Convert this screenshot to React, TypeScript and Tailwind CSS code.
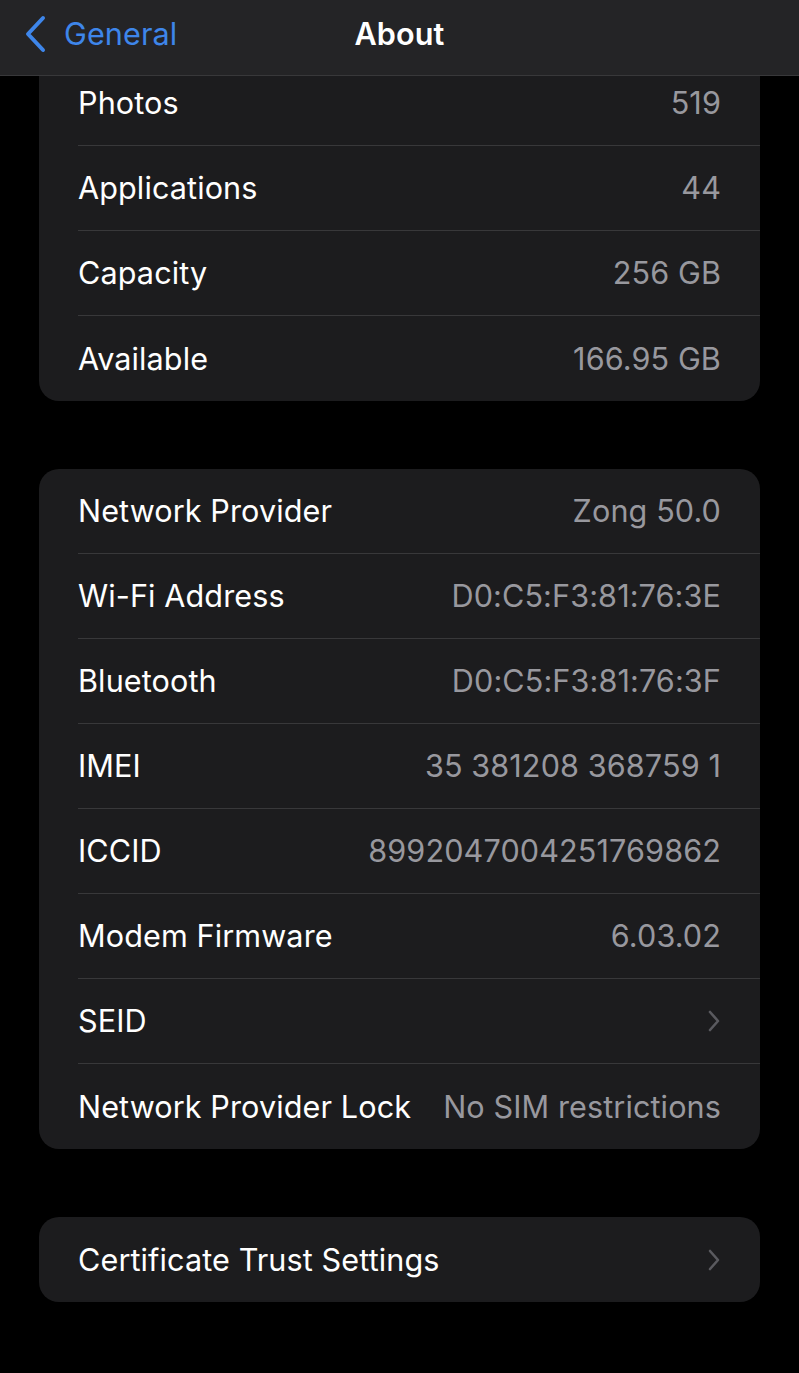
import React from "react";

type Row = { label: string; value?: string; chevron?: boolean };

const Chevron = () => (
  <svg width="14" height="24" viewBox="0 0 14 24" fill="none">
    <path d="M3 3l8 9-8 9" stroke="#5a5a5f" strokeWidth="2.6" strokeLinecap="round" strokeLinejoin="round" />
  </svg>
);

function Card({ rows, className }: { rows: Row[]; className: string }) {
  return (
    <div className={`mx-[39px] bg-[#1c1c1e] ${className}`}>
      {rows.map((r, i) => (
        <div key={r.label} className="pl-[39px]">
          <div
            className={`h-[85px] flex items-center justify-between pr-[39px] ${
              i < rows.length - 1 ? "border-b border-[#38383a]" : ""
            }`}
          >
            <span className="text-white">{r.label}</span>
            {r.chevron ? (
              <Chevron />
            ) : (
              <span className="text-[#98989e]">{r.value}</span>
            )}
          </div>
        </div>
      ))}
    </div>
  );
}

export default function App() {
  return (
    <div
      className="relative w-[799px] h-[1373px] bg-black overflow-hidden text-[30.6px] tracking-[0.1px]"
      style={{ fontFamily: "Inter, 'Noto Sans', sans-serif" }}
    >
      <div className="absolute top-0 left-0 right-0 h-[76px] bg-[#242426] border-b border-[#38383a] z-10 flex items-center justify-center pb-[8px]">
        <div className="absolute left-[24px] top-0 h-[67px] flex items-center gap-[16px] text-[#3e86ea]">
          <svg width="24" height="38" viewBox="0 0 24 38" fill="none">
            <path d="M19 3L4 19l15 16" stroke="#3e86ea" strokeWidth="4" strokeLinecap="round" strokeLinejoin="round" />
          </svg>
          <span>General</span>
        </div>
        <span className="text-white font-semibold">About</span>
      </div>

      <div className="pt-[61px] flex flex-col">
        <Card
          className="rounded-b-[20px]"
          rows={[
            { label: "Photos", value: "519" },
            { label: "Applications", value: "44" },
            { label: "Capacity", value: "256 GB" },
            { label: "Available", value: "166.95 GB" },
          ]}
        />
        <Card
          className="rounded-[20px] mt-[68px]"
          rows={[
            { label: "Network Provider", value: "Zong 50.0" },
            { label: "Wi-Fi Address", value: "D0:C5:F3:81:76:3E" },
            { label: "Bluetooth", value: "D0:C5:F3:81:76:3F" },
            { label: "IMEI", value: "35 381208 368759 1" },
            { label: "ICCID", value: "8992047004251769862" },
            { label: "Modem Firmware", value: "6.03.02" },
            { label: "SEID", chevron: true },
            { label: "Network Provider Lock", value: "No SIM restrictions" },
          ]}
        />
        <Card
          className="rounded-[20px] mt-[68px]"
          rows={[{ label: "Certificate Trust Settings", chevron: true }]}
        />
      </div>
    </div>
  );
}
